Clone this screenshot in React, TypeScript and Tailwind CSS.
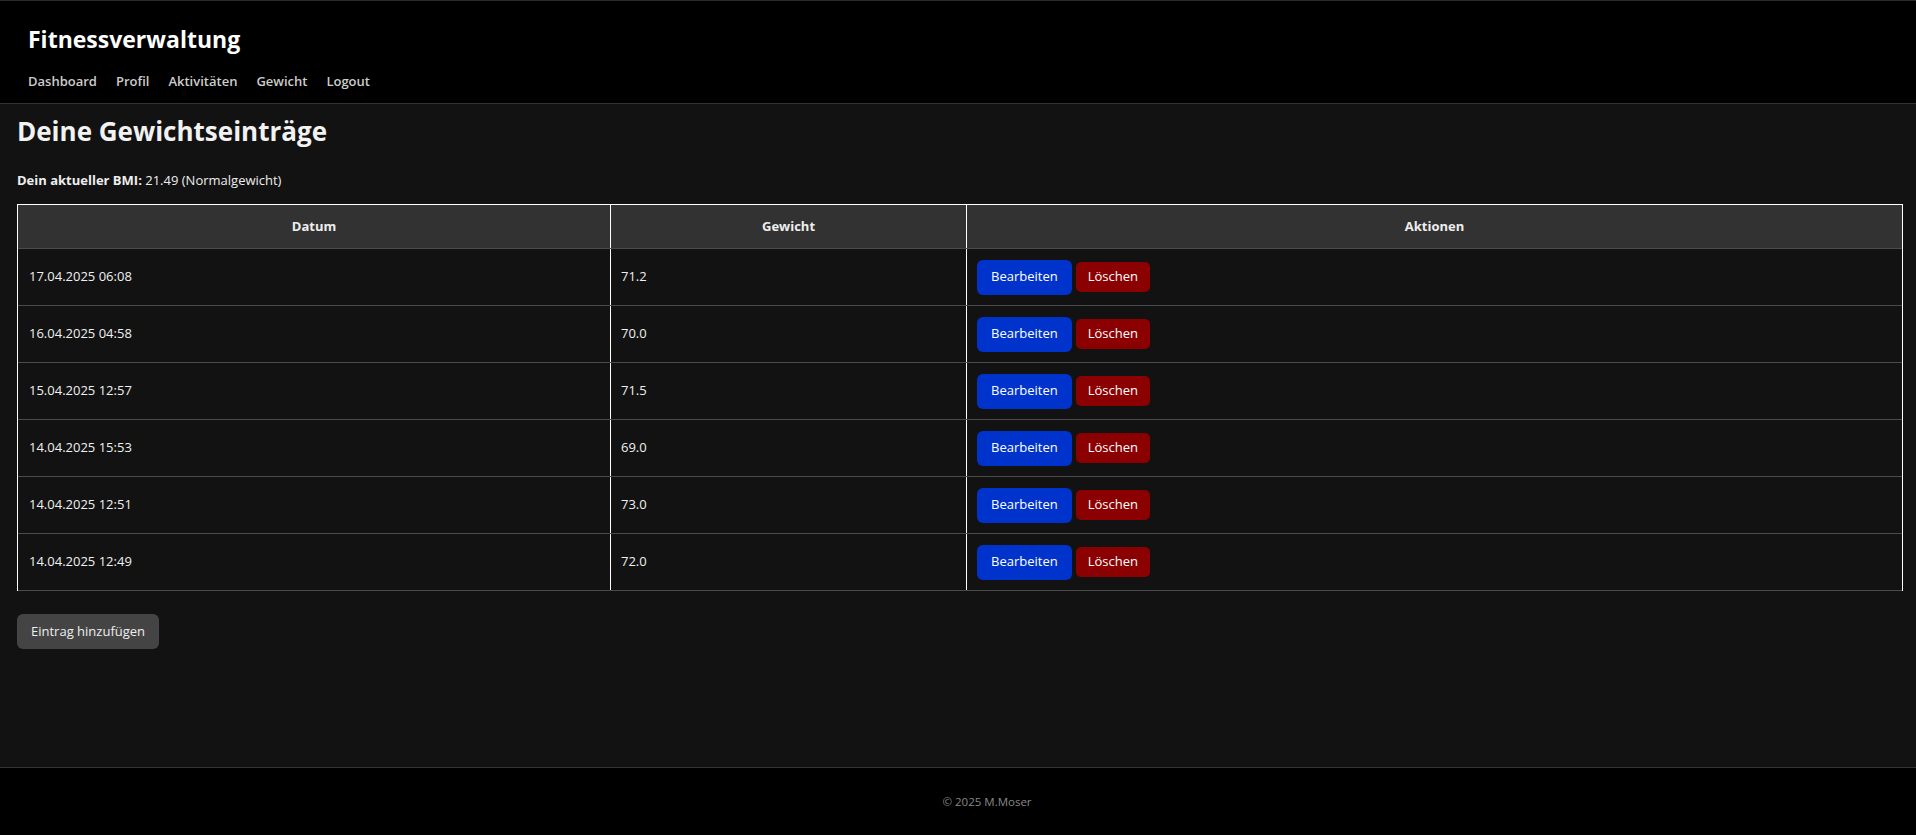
import React from "react";

type Entry = { date: string; weight: string };

const entries: Entry[] = [
  { date: "17.04.2025 06:08", weight: "71.2" },
  { date: "16.04.2025 04:58", weight: "70.0" },
  { date: "15.04.2025 12:57", weight: "71.5" },
  { date: "14.04.2025 15:53", weight: "69.0" },
  { date: "14.04.2025 12:51", weight: "73.0" },
  { date: "14.04.2025 12:49", weight: "72.0" },
];

const navLinks = ["Dashboard", "Profil", "Aktivitäten", "Gewicht", "Logout"];

function WeightRow({ entry }: { entry: Entry }) {
  return (
    <div className="grid grid-cols-[592px_356px_1fr] h-[57px] border-b border-[#4a4a4a] text-[13px] text-[#f0f0f0]">
      <div className="flex items-center px-[11px]">{entry.date}</div>
      <div className="flex items-center px-[10px] border-l border-white">{entry.weight}</div>
      <div className="flex items-center gap-[4px] px-[10px] border-l border-white">
        <button className="h-[35px] px-[14px] rounded-[6px] bg-[#0033cc] text-white text-[13px]">
          Bearbeiten
        </button>
        <button className="h-[30px] px-[12px] rounded-[5px] bg-[#8b0000] text-white text-[13px]">
          Löschen
        </button>
      </div>
    </div>
  );
}

export default function App() {
  return (
    <div className="min-h-screen flex flex-col bg-[#121212] text-white border-t border-[#2b2b2b] font-['Open_Sans',sans-serif]">
      {/* Header */}
      <header className="h-[103px] bg-black border-b border-[#333] px-[28px] pt-[25px]">
        <h1 className="text-[23px] leading-[1.2] font-bold">Fitnessverwaltung</h1>
        <nav className="mt-[17px] flex gap-[19px] text-[13px] leading-[20px] font-semibold text-[#cccccc]">
          {navLinks.map((l) => (
            <a key={l} href="#" className="hover:text-white">
              {l}
            </a>
          ))}
        </nav>
      </header>

      <main className="flex-1 px-[17px] pt-[12px]">
        <h2 className="text-[26px] leading-[1.2] font-bold text-[#f2f2f2]">Deine Gewichtseinträge</h2>
        <p className="mt-[24px] text-[13px] leading-[18px] text-[#eeeeee]">
          <span className="font-bold">Dein aktueller BMI:</span> 21.49 (Normalgewicht)
        </p>

        {/* Table */}
        <div className="mt-[15px] w-[1886px] border-t border-l border-r border-white">
          <div className="grid grid-cols-[592px_356px_1fr] h-[44px] bg-[#323232] border-b border-[#4a4a4a] text-[13px] font-bold text-[#eeeeee]">
            <div className="flex items-center justify-center">Datum</div>
            <div className="flex items-center justify-center border-l border-white">Gewicht</div>
            <div className="flex items-center justify-center border-l border-white">Aktionen</div>
          </div>
          {entries.map((e) => (
            <WeightRow key={e.date + e.weight} entry={e} />
          ))}
        </div>

        <button className="mt-[23px] h-[35px] px-[14px] rounded-[6px] bg-[#444] text-[#eeeeee] text-[13px]">
          Eintrag hinzufügen
        </button>
      </main>

      <footer className="h-[68px] bg-black border-t border-[#333] flex items-center justify-center pl-[58px] text-[11.5px] text-[#888]">
        © 2025 M.Moser
      </footer>
    </div>
  );
}
